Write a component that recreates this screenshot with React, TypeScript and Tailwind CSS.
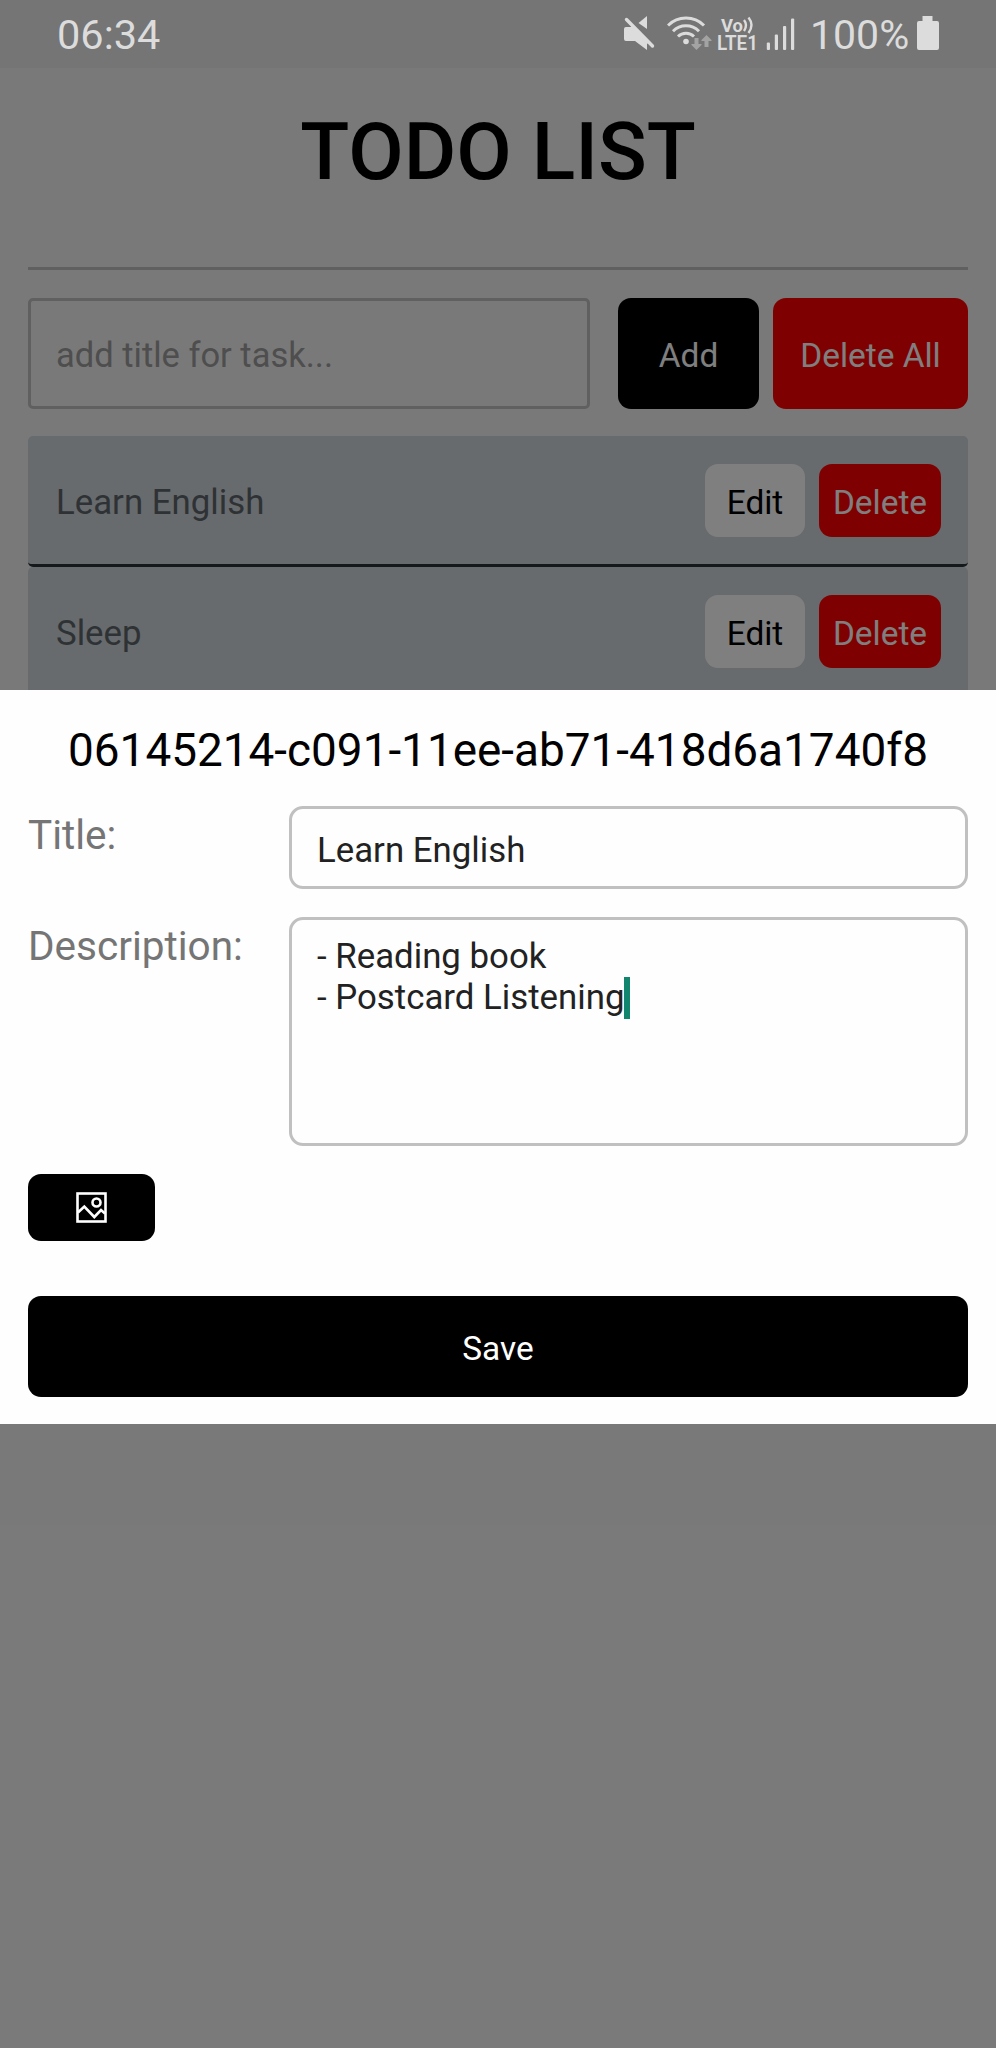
import React from "react";

const tasks = ["Learn English", "Sleep"];

function StatusBar() {
  return (
    <header className="relative z-20 flex h-[68px] items-start bg-[#757575] pl-[57px] pr-[57px] pt-[16px] text-[#dcdcdc]">
      <span className="mt-[-6px] text-[41.5px] leading-[50px]">06:34</span>
      <div className="ml-auto flex items-start">
        <svg width="31" height="35" viewBox="0 0 31 35" fill="currentColor">
          <path d="M0 13 Q0 11 2 11 H8 L23 26 V34 L11 25 H2 Q0 25 0 23 Z" />
          <path d="M8 9 L25 26 L23 28 L6 13 Z" />
          <path d="M23 0 V13 L14.5 7 Z" />
          <path d="M2.5 3.5 L28.5 30" stroke="currentColor" strokeWidth="3.4" strokeLinecap="round" />
        </svg>
        <svg className="ml-[12px]" width="45" height="35" viewBox="0 0 45 35" fill="none" stroke="currentColor" strokeWidth="3">
          <path d="M1 9.5 A25.5 25.5 0 0 1 37 9.5" />
          <path d="M6 15.2 A18.5 18.5 0 0 1 32 15.2" />
          <path d="M11 20.5 A11.5 11.5 0 0 1 27 20.5" />
          <circle cx="19" cy="25.5" r="2.8" fill="currentColor" stroke="none" />
          <g fill="#a3a3a3" stroke="none">
            <path d="M27.5 22 H31.5 V28 H34.5 V29 L29.5 34 L24.5 29 V28 H27.5 Z" />
            <path d="M37.5 31 H41.5 V25 H44.5 V24 L39.5 19 L34.5 24 V25 H37.5 Z" />
          </g>
        </svg>
        <svg className="ml-[5px] overflow-visible" width="42" height="36" viewBox="0 0 42 36" fill="currentColor">
          <text x="4" y="15.5" fontSize="19" fontWeight="700" textLength="22" lengthAdjust="spacingAndGlyphs">Vo</text>
          <g fill="none" stroke="currentColor" strokeWidth="2.4">
            <path d="M27 4 Q31 9 27 15" />
            <path d="M31.5 1.5 Q37.5 9 31.5 17" />
          </g>
          <text x="0" y="33.8" fontSize="20" fontWeight="600" textLength="41" lengthAdjust="spacingAndGlyphs">LTE1</text>
        </svg>
        <svg className="ml-[7px]" width="30" height="35" viewBox="0 0 30 35" fill="currentColor">
          <rect x="0.8" y="26.5" width="3.2" height="7.5" rx="1" />
          <rect x="8.8" y="18.5" width="3.2" height="15.5" rx="1" />
          <rect x="17" y="10" width="3.2" height="24" rx="1" />
          <rect x="25" y="2.5" width="3.2" height="31.5" rx="1" />
        </svg>
        <span className="ml-[14px] mt-[-6px] w-[97px] whitespace-nowrap text-[41px] leading-[50px]">100%</span>
        <svg className="ml-[9px]" width="23" height="35" viewBox="0 0 23 35" fill="currentColor">
          <path d="M6.5 0 H16.5 V5 H21 Q23 5 23 7 V32 Q23 34 21 34 H3 Q1 34 1 32 V7 Q1 5 3 5 H6.5 Z" />
        </svg>
      </div>
    </header>
  );
}

function TaskRow({ title }: { title: string }) {
  return (
    <li className="flex h-[131px] items-start justify-between rounded-[5px] border-b-[3px] border-[#2c3236] bg-[#ced6da] pl-[28px] pr-[27px] pt-[28px] text-[33.4px] leading-[77px]">
      <span className="text-[34.8px] text-[#5e656a]">{title}</span>
      <div className="flex gap-[14px]">
        <button className="h-[73px] w-[100px] rounded-[13px] bg-white text-black">Edit</button>
        <button className="h-[73px] w-[122px] rounded-[13px] bg-[#ff0000] text-white">Delete</button>
      </div>
    </li>
  );
}

function EditSheet() {
  return (
    <section className="absolute inset-x-0 top-[690px] z-20 flex h-[734px] flex-col bg-[#fefefe] px-[28px]">
      <h2 className="mt-[28px] whitespace-nowrap text-center text-[45.9px] leading-[64px] text-black">
        06145214-c091-11ee-ab71-418d6a1740f8
      </h2>
      <div className="mt-[24px] flex h-[83px]">
        <label className="w-[261px] text-[40.5px] leading-[59px] text-[#757575]">Title:</label>
        <div className="flex-1 rounded-[14px] border-[3px] border-[#c0c0c0] pl-[25px] text-[34.8px] leading-[82px] text-[#222222]">
          Learn English
        </div>
      </div>
      <div className="mt-[28px] flex h-[229px]">
        <label className="w-[261px] text-[40.5px] leading-[59px] text-[#757575]">Description:</label>
        <div className="flex-1 rounded-[14px] border-[3px] border-[#c0c0c0] pl-[25px] pt-[16px] text-[34.8px] leading-[41px] text-[#222222]">
          <p>- Reading book</p>
          <p className="flex">
            - Postcard Listening
            <span className="h-[42px] w-[6px] bg-[#12856f]" />
          </p>
        </div>
      </div>
      <button className="mt-[28px] flex h-[67px] w-[127px] items-center justify-center rounded-[13px] bg-black">
        <svg width="31" height="31" viewBox="0 0 31 31" fill="none" stroke="white" strokeWidth="2.6">
          <rect x="1.5" y="1.5" width="28" height="28" />
          <circle cx="20.5" cy="10.5" r="4" />
          <path d="M2 20.5 L8.3 14.5 L18.3 25 L25 18 L29 21.5" />
        </svg>
      </button>
      <button className="mt-[55px] h-[101px] rounded-[13px] bg-black pt-[5px] text-[33.4px] text-white">Save</button>
    </section>
  );
}

export default function App() {
  return (
    <div className="relative h-[2048px] w-[996px] overflow-hidden bg-[#f3f3f3] font-['Roboto',sans-serif]">
      <StatusBar />
      <main className="px-[28px]">
        <h1 className="mt-[36px] text-center text-[80.5px] font-medium leading-[96px] text-black">TODO LIST</h1>
        <hr className="mt-[67px] border-t-[3px] border-[#c0c0c0]" />
        <div className="mt-[28px] flex h-[111px] text-[33.4px] leading-[115px]">
          <div className="w-[562px] rounded-[5px] border-[3px] border-[#c0c0c0] pl-[25px] text-[34.5px] leading-[109px] text-[#9c9c9c]">
            add title for task...
          </div>
          <button className="ml-[28px] w-[141px] rounded-[13px] bg-black text-white">Add</button>
          <button className="ml-[14px] flex-1 rounded-[13px] bg-[#ff0000] text-white">Delete All</button>
        </div>
        <ul className="mt-[27px]">
          {tasks.map((title) => (
            <TaskRow key={title} title={title} />
          ))}
        </ul>
      </main>
      <div className="absolute inset-0 z-10 bg-black/50" />
      <EditSheet />
    </div>
  );
}
